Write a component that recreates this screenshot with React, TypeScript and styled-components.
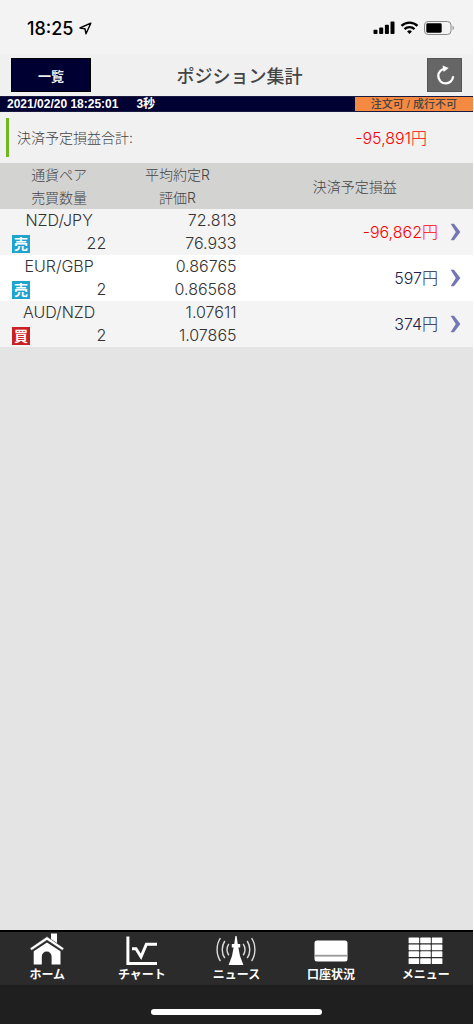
import React from 'react';
import styled, { createGlobalStyle } from 'styled-components';

const GlobalStyle = createGlobalStyle`
  *, *::before, *::after { box-sizing: border-box; }
  html, body { margin: 0; background: #fff; }
  body { font-family: Inter, "Noto Sans CJK JP", sans-serif; font-weight: 300; color: #333; }
  button { font: inherit; }
`;

const Screen = styled.div`
  min-height: 100vh;
  display: flex;
  flex-direction: column;
  background: #e4e4e4;
  border-right: 1px solid #fff;
`;

const StatusBar = styled.div`
  height: 54px;
  padding: 2px 18px 0 27px;
  display: flex;
  align-items: center;
  justify-content: space-between;
  background: #f3f3f3;
  color: #000;
`;

const Clock = styled.div`
  display: flex;
  align-items: center;
  gap: 6px;
  font-size: 18px;
  font-weight: 500;
`;

const StatusIcons = styled.div`
  display: flex;
  align-items: center;
  gap: 5px;
`;

const Header = styled.header`
  height: 42px;
  padding: 4px 11px;
  display: grid;
  grid-template-columns: 80px 1fr 74px;
  align-items: center;
  background: #f0f0f0;
`;

const ListButton = styled.button`
  height: 34px;
  padding: 0;
  border: 1px solid #000;
  background: #000033;
  color: #eee;
  font-family: "Noto Sans CJK JP", sans-serif;
  font-size: 13px;
  font-weight: 700;
`;

const Title = styled.h1`
  margin: 0;
  text-align: center;
  font-family: "Noto Sans CJK JP", sans-serif;
  font-size: 18px;
  font-weight: 500;
  color: #444;
`;

const RefreshButton = styled.button`
  justify-self: end;
  width: 35px;
  height: 34px;
  padding: 0;
  border: 1px solid #555;
  background: #666;
  display: flex;
  align-items: center;
  justify-content: center;
`;

const InfoBar = styled.div`
  height: 16px;
  display: grid;
  grid-template-columns: 3fr 1fr;
  border: solid #1a1a40;
  border-width: 1px 0;
  background: #000033;
  line-height: 14px;
`;

const Timestamp = styled.div`
  padding-left: 7px;
  display: flex;
  gap: 18px;
  color: #fff;
  font-family: "Liberation Sans", "Noto Sans CJK JP", sans-serif;
  font-size: 12px;
  font-weight: 700;
`;

const OrderState = styled.div`
  background: #f48942;
  text-align: center;
  font-family: "Liberation Sans", "Noto Sans CJK JP", sans-serif;
  font-size: 11px;
  font-weight: 500;
  color: #444;
`;

const Summary = styled.section`
  height: 51px;
  padding: 6px 46px 6px 6px;
  display: flex;
  background: #f1f1f1;
`;

const SummaryInner = styled.div`
  flex: 1;
  padding: 0 0 2px 8px;
  display: flex;
  align-items: center;
  justify-content: space-between;
  border-left: 3px solid #6fb91f;
`;

const SummaryLabel = styled.span`
  font-size: 14px;
  color: #444;
`;

const Amount = styled.span<{ $negative?: boolean }>`
  font-size: 16px;
  color: ${(p) => (p.$negative ? '#ff0000' : '#22224a')};
`;

const Table = styled.table`
  width: 100%;
  table-layout: fixed;
  border-collapse: collapse;
`;

const HeadCell = styled.th`
  height: 46px;
  padding: 0;
  background: #d3d3d2;
  font-size: 14px;
  line-height: 23px;
  font-weight: 300;
  color: #444;
  &:last-child { width: 50%; }
`;

const Row = styled.tr`
  background: #f4f4f4;
  &:nth-child(even) { background: #fff; }
`;

const Cell = styled.td<{ $align?: string }>`
  height: 46px;
  padding: 0;
  font-size: 16px;
  line-height: 23px;
  text-align: ${(p) => p.$align ?? 'left'};
`;

const Pair = styled.div`
  text-align: center;
`;

const Quantity = styled.div`
  padding: 0 12px;
  display: flex;
  align-items: center;
  justify-content: space-between;
`;

const Side = styled.span<{ $buy: boolean }>`
  width: 18px;
  height: 18px;
  background: ${(p) => (p.$buy ? '#cb1f26' : '#20a4cf')};
  color: #fff;
  font-size: 14px;
  line-height: 18px;
  font-weight: 700;
  text-align: center;
`;

const ProfitLink = styled.a`
  padding-right: 12px;
  display: flex;
  align-items: center;
  justify-content: flex-end;
  gap: 12px;
  text-decoration: none;
`;

const Footer = styled.footer`
  margin-top: auto;
  background: #1f1f1f;
`;

const Nav = styled.nav`
  height: 55px;
  display: grid;
  grid-template-columns: repeat(5, 1fr);
  border-top: 2px solid #000;
  background: #2b2b2b;
`;

const NavItem = styled.a`
  padding-top: 1px;
  display: flex;
  flex-direction: column;
  align-items: center;
  color: #fff;
  text-decoration: none;
  font-family: "Noto Sans CJK JP", sans-serif;
  font-size: 12px;
  line-height: 14px;
  font-weight: 700;
`;

const HomeArea = styled.div`
  height: 39px;
  display: flex;
  justify-content: center;
  align-items: center;
  padding-top: 14px;
`;

const HomeBar = styled.div`
  width: 36%;
  height: 6px;
  border-radius: 3px;
  background: #fff;
`;

const LocationIcon = () => (
  <svg width="13" height="13" viewBox="0 0 13 13" fill="none" stroke="#000" strokeWidth="1.4" strokeLinejoin="round">
    <path d="M11.8 1.2 1 6l5 .8 1 5z" />
  </svg>
);

const SignalIcon = () => (
  <svg width="22" height="14" viewBox="0 0 22 14">
    <rect x="0.5" y="8.8" width="4" height="4.2" rx="0.8" />
    <rect x="6.2" y="6.6" width="4" height="6.4" rx="0.8" />
    <rect x="11.9" y="3.7" width="4" height="9.3" rx="0.8" />
    <rect x="17.5" y="0.6" width="4" height="12.4" rx="0.8" />
  </svg>
);

const WifiIcon = () => (
  <svg width="19" height="14" viewBox="0 0 18 14" fill="none" stroke="#000" strokeWidth="2.4">
    <path d="M1 4.9a11.4 11.4 0 0 1 16 0" />
    <path d="M4 8.1a7.2 7.2 0 0 1 10 0" />
    <path d="M6.6 10.4a3.6 3.6 0 0 1 4.8 0L9 13z" fill="#000" stroke="none" />
  </svg>
);

const BatteryIcon = () => (
  <svg width="31" height="14" viewBox="0 0 31 14">
    <rect x="0.5" y="0.5" width="26.5" height="13" rx="3.6" fill="none" stroke="#888" />
    <rect x="2.3" y="2.3" width="15.4" height="9.4" rx="1.4" />
    <path d="M28.6 4.8c1.5.5 1.5 3.9 0 4.4z" fill="#777" />
  </svg>
);

const RefreshIcon = () => (
  <svg width="22" height="22" viewBox="0 0 22 22" fill="none" stroke="#fff" strokeWidth="2.3">
    <path d="M11.6 4.6a7.4 7.4 0 1 0 7.5 7.6" />
    <path d="M8.6 1.4l6 2.5-5 4.2z" fill="#fff" stroke="none" />
  </svg>
);

const ChevronIcon = () => (
  <svg width="11" height="18" viewBox="0 0 11 18" fill="#7577b5" role="img" aria-label="詳細">
    <path d="M0.6 0.8H4L10.4 9 4 17.2H0.6L5.8 9z" />
  </svg>
);

const HomeIcon = () => (
  <svg width="36" height="34" viewBox="0 0 36 34" fill="#fff">
    <path d="M22 0.5h6v10.7l-6-4.8z" />
    <path d="M18 3.6.9 15.2l1.7 2.2L18 7.2l15.4 10.2 1.7-2.2z" stroke="#2b2b2b" strokeWidth="0.6" />
    <path d="M18 9.4 4.7 18.2V31.500h8.100v-8a4.800 4.800 0 0 1 9.800 0v8h8.900V18.200z" />
  </svg>
);

const ChartIcon = () => (
  <svg width="36" height="34" viewBox="0 0 36 34" fill="none" stroke="#fff">
    <path d="M3.9 3.5v27H33" strokeWidth="3" />
    <path d="M8 15.8h4l5 8 5.4-12.6H33" strokeWidth="3" />
  </svg>
);

const NewsIcon = () => (
  <svg width="42" height="34" viewBox="0 0 42 34" fill="none" stroke="#ddd" strokeWidth="1.4">
    <path d="M20.4 3h1.2l1.2 8h2.4v3.5h-1.8L25 23l3.4 9H13.600L17 23l1.600-8.500h-1.800V11h2.400z" fill="#fff" stroke="none" />
    <path d="M5.400 5.200c-4.400 6.400-4.400 16.400 0 22.800M9.800 8c-3.400 5-3.400 12.400 0 17.200M13.800 10.800c-2.200 3.600-2.200 8 0 11.600" />
    <path d="M36.600 5.200c4.400 6.400 4.400 16.400 0 22.800M32.200 8c3.400 5 3.400 12.400 0 17.200M28.200 10.800c2.200 3.600 2.200 8 0 11.600" />
  </svg>
);

const CardIcon = () => (
  <svg width="36" height="34" viewBox="0 0 36 34">
    <rect x="1.5" y="7.5" width="33" height="21" rx="2.5" fill="#fff" />
    <rect x="1.5" y="21.8" width="33" height="1.8" fill="#999" />
  </svg>
);

const GridIcon = () => (
  <svg width="36" height="34" viewBox="0 0 36 34" fill="#fff">
    {[0, 1, 2, 3].map((r) =>
      [0, 1, 2].map((c) => (
        <rect key={`${r}-${c}`} x={0.6 + c * 11.6} y={4.5 + r * 6.9} width="10.6" height="5.8" rx="0.6" />
      )),
    )}
  </svg>
);

const positions = [
  { pair: 'NZD/JPY', buy: false, qty: '22', avg: '72.813', rate: '76.933', profit: '-96,862円' },
  { pair: 'EUR/GBP', buy: false, qty: '2', avg: '0.86765', rate: '0.86568', profit: '597円' },
  { pair: 'AUD/NZD', buy: true, qty: '2', avg: '1.07611', rate: '1.07865', profit: '374円' },
];

const navItems = [
  { label: 'ホーム', Icon: HomeIcon },
  { label: 'チャート', Icon: ChartIcon },
  { label: 'ニュース', Icon: NewsIcon },
  { label: '口座状況', Icon: CardIcon },
  { label: 'メニュー', Icon: GridIcon },
];

export default function App() {
  return (
    <Screen>
      <GlobalStyle />
      <StatusBar>
        <Clock>
          18:25
          <LocationIcon />
        </Clock>
        <StatusIcons>
          <SignalIcon />
          <WifiIcon />
          <BatteryIcon />
        </StatusIcons>
      </StatusBar>
      <Header>
        <ListButton type="button">一覧</ListButton>
        <Title>ポジション集計</Title>
        <RefreshButton type="button" aria-label="更新">
          <RefreshIcon />
        </RefreshButton>
      </Header>
      <InfoBar>
        <Timestamp>
          <span>2021/02/20 18:25:01</span>
          <span>3秒</span>
        </Timestamp>
        <OrderState>注文可 / 成行不可</OrderState>
      </InfoBar>
      <Summary>
        <SummaryInner>
          <SummaryLabel>決済予定損益合計:</SummaryLabel>
          <Amount $negative>-95,891円</Amount>
        </SummaryInner>
      </Summary>
      <Table>
        <thead>
          <tr>
            <HeadCell scope="col">通貨ペア<br />売買数量</HeadCell>
            <HeadCell scope="col">平均約定R<br />評価R</HeadCell>
            <HeadCell scope="col">決済予定損益</HeadCell>
          </tr>
        </thead>
        <tbody>
          {positions.map((p) => (
            <Row key={p.pair}>
              <Cell>
                <Pair>{p.pair}</Pair>
                <Quantity>
                  <Side $buy={p.buy}>{p.buy ? '買' : '売'}</Side>
                  {p.qty}
                </Quantity>
              </Cell>
              <Cell $align="right">
                {p.avg}
                <br />
                {p.rate}
              </Cell>
              <Cell>
                <ProfitLink href="#">
                  <Amount $negative={p.profit.startsWith('-')}>{p.profit}</Amount>
                  <ChevronIcon />
                </ProfitLink>
              </Cell>
            </Row>
          ))}
        </tbody>
      </Table>
      <Footer>
        <Nav>
          {navItems.map(({ label, Icon }) => (
            <NavItem key={label} href="#">
              <Icon />
              {label}
            </NavItem>
          ))}
        </Nav>
        <HomeArea>
          <HomeBar />
        </HomeArea>
      </Footer>
    </Screen>
  );
}
